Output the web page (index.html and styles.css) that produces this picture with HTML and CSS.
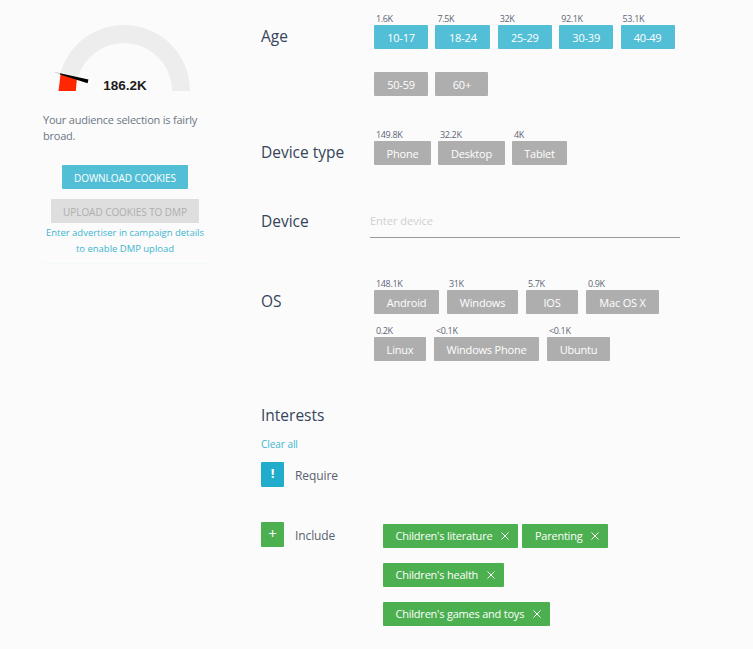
FILE: index.html
```html
<!DOCTYPE html>
<html lang="en">
<head>
<meta charset="utf-8">
<title>Audience</title>
<link rel="stylesheet" href="styles.css">
</head>
<body>
<div class="page">
  <aside class="side">
    <svg class="gauge" viewBox="0 0 261 100" width="261" height="100">
      <path d="M58 91A66 66 0 0 1 190 91L172 91A48 48 0 0 0 76 91Z" fill="#eeedee"/>
      <path d="M58.6 91L60.6 74.3L76.8 79.5L75.8 91Z" fill="#ff2600"/>
      <path d="M55 72L60 73.2L60 74.2L55 72.6Z" fill="#bbb"/>
      <path d="M60 73.2L88.4 79.6L87.6 83.2L60 74.4Z" fill="#000"/>
      <text class="gauge-num" x="125" y="90" text-anchor="middle">186.2K</text>
    </svg>
    <p class="note">Your audience selection is fairly broad.</p>
    <div class="actions">
      <button class="btn btn-primary">DOWNLOAD COOKIES</button>
      <button class="btn btn-off">UPLOAD COOKIES TO DMP</button>
      <p class="hint">Enter advertiser in campaign details<br>to enable DMP upload</p>
    </div>
  </aside>
  <main class="main">
    <section class="row row-age">
      <h2 class="label">Age</h2>
      <div class="opts">
        <div class="opt"><span class="count">1.6K</span><span class="chip on w54">10-17</span></div>
        <div class="opt"><span class="count">7.5K</span><span class="chip on w55">18-24</span></div>
        <div class="opt"><span class="count">32K</span><span class="chip on w54">25-29</span></div>
        <div class="opt"><span class="count">92.1K</span><span class="chip on w54">30-39</span></div>
        <div class="opt"><span class="count">53.1K</span><span class="chip on w54">40-49</span></div>
        <div class="opt"><span class="count">&nbsp;</span><span class="chip w54">50-59</span></div>
        <div class="opt"><span class="count">&nbsp;</span><span class="chip w53">60+</span></div>
      </div>
    </section>
    <section class="row row-type">
      <h2 class="label">Device type</h2>
      <div class="opts">
        <div class="opt"><span class="count">149.8K</span><span class="chip w57">Phone</span></div>
        <div class="opt"><span class="count">32.2K</span><span class="chip w67">Desktop</span></div>
        <div class="opt"><span class="count">4K</span><span class="chip w55">Tablet</span></div>
      </div>
    </section>
    <section class="row row-device">
      <h2 class="label">Device</h2>
      <input class="field" type="text" placeholder="Enter device">
    </section>
    <section class="row row-os">
      <h2 class="label">OS</h2>
      <div class="opts">
        <div class="opt"><span class="count">148.1K</span><span class="chip w65">Android</span></div>
        <div class="opt"><span class="count">31K</span><span class="chip w71">Windows</span></div>
        <div class="opt"><span class="count">5.7K</span><span class="chip w52">IOS</span></div>
        <div class="opt"><span class="count">0.9K</span><span class="chip w73">Mac OS X</span></div>
        <div class="opt"><span class="count">0.2K</span><span class="chip w52">Linux</span></div>
        <div class="opt"><span class="count">&lt;0.1K</span><span class="chip w105">Windows Phone</span></div>
        <div class="opt"><span class="count">&lt;0.1K</span><span class="chip w63">Ubuntu</span></div>
      </div>
    </section>
    <section class="interests">
      <h2 class="label-plain">Interests</h2>
      <a class="clear" href="#">Clear all</a>
      <div class="mode mode-req">
        <span class="mode-box box-blue">!</span>
        <span class="mode-name">Require</span>
      </div>
      <div class="mode mode-inc">
        <span class="mode-box box-green">+</span>
        <span class="mode-name">Include</span>
        <div class="tags">
          <span class="tag">Children's literature<svg class="x" viewBox="0 0 8 8" width="8" height="8"><path d="M.5.5L7.5 7.5M7.5.5L.5 7.5"/></svg></span>
          <span class="tag">Parenting<svg class="x" viewBox="0 0 8 8" width="8" height="8"><path d="M.5.5L7.5 7.5M7.5.5L.5 7.5"/></svg></span>
          <span class="tag">Children's health<svg class="x" viewBox="0 0 8 8" width="8" height="8"><path d="M.5.5L7.5 7.5M7.5.5L.5 7.5"/></svg></span>
          <span class="tag">Children's games and toys<svg class="x" viewBox="0 0 8 8" width="8" height="8"><path d="M.5.5L7.5 7.5M7.5.5L.5 7.5"/></svg></span>
        </div>
      </div>
    </section>
  </main>
</div>
</body>
</html>
```
FILE: styles.css
```css
* { box-sizing: border-box; }
html, body { margin: 0; padding: 0; height: 100%; }
body {
  background: #fbfbfb;
  font-family: "Open Sans", "Noto Sans", sans-serif;
  color: #35445a;
  overflow: hidden;
}
.page { display: flex; width: 753px; height: 649px; }

.side { width: 261px; flex: none; }
.gauge { display: block; margin-bottom: 12px; }
.gauge-num { font: bold 13.5px "Liberation Sans", Arial, sans-serif; fill: #1c1c1c; }
.note {
  margin: 0 0 0 43px;
  width: 165px;
  font-size: 11px;
  line-height: 16px;
  letter-spacing: -.22px;
  color: #6d7686;
}
.actions {
  margin: 21px 0 0 43px;
  width: 164px;
  display: flex;
  flex-direction: column;
  align-items: center;
  padding-bottom: 6px;
  border-bottom: 1px solid #f1f9fb;
}
.btn {
  border: 0;
  border-radius: 1px;
  height: 24px;
  padding: 2px 0 0;
  font-family: inherit;
  font-size: 10px;
  font-weight: 500;
  color: #fff;
  letter-spacing: -.05px;
}
.btn-primary { width: 126px; background: #53bfd6; }
.btn-off { width: 148px; margin-top: 10px; background: #dedede; color: #aeaeae; }
.hint {
  margin: 2px -10px 0;
  text-align: center;
  font-size: 9.5px;
  line-height: 16px;
  font-weight: 500;
  letter-spacing: -.02px;
  color: #3bb5cf;
}

.main { flex: 1; padding-top: 12px; }
.row { display: flex; }
.label, .label-plain { margin: 0; font-size: 15.5px; line-height: 22px; font-weight: 500; color: #35445a; }
.label { width: 113px; flex: none; padding-top: 12.5px; }
.opts { display: flex; flex-wrap: wrap; gap: 10px 0; width: 310px; }
.opt { display: flex; flex-direction: column; margin-right: 7.4px; }
.row-type .opt { margin-right: 7px; }
.row-os .opt { margin-right: 8px; }
.count { height: 13px; padding-left: 2px; font-size: 9px; line-height: 13px; letter-spacing: -.35px; color: #5d6675; white-space: nowrap; }
.chip {
  display: flex;
  height: 24px;
  align-items: center;
  justify-content: center;
  border-radius: 1px;
  background: #aeaeae;
  color: #fff;
  font-size: 11px;
  font-weight: 500;
  letter-spacing: -.2px;
  white-space: nowrap;
}
.chip.on { background: #53bfd6; }
.w52 { width: 52px; } .w53 { width: 53px; } .w54 { width: 54px; } .w55 { width: 55px; }
.w57 { width: 57px; } .w63 { width: 63px; } .w65 { width: 65px; } .w67 { width: 67px; }
.w71 { width: 71px; } .w73 { width: 73px; } .w105 { width: 105px; }

.row-type { margin-top: 32px; }
.row-device { margin-top: 32px; }
.field {
  margin: 13px 0 0 -4px;
  width: 310px;
  height: 28px;
  padding: 0 0 7px;
  border: 0;
  border-bottom: 1px solid #9a9a9a;
  background: transparent;
  font-family: inherit;
  font-size: 11px;
  color: #35445a;
  outline: none;
}
.field::placeholder { color: #cfcfcf; opacity: 1; }
.row-os { margin-top: 39px; }

.interests { margin-top: 43px; }
.clear { display: block; margin-top: 10px; font-size: 10px; line-height: 16px; letter-spacing: -.05px; color: #3bb5cf; text-decoration: none; }
.mode { display: flex; align-items: flex-start; }
.mode-req { margin-top: 10px; }
.mode-inc { margin-top: 32px; }
.mode-box {
  width: 23px;
  height: 25px;
  flex: none;
  border-radius: 1px;
  color: #fff;
  font-size: 13px;
  line-height: 22px;
  text-align: center;
}
.box-blue { background: #22accb; font-weight: 700; }
.box-green { background: #4caf50; font-weight: 400; font-size: 15px; }
.mode-name { margin-left: 11px; width: 88px; flex: none; font-size: 12px; line-height: 28px; letter-spacing: -.1px; color: #59626f; }
.tags { display: flex; flex-wrap: wrap; gap: 15px 4px; width: 240px; padding-top: 2px; }
.tag {
  display: inline-flex;
  align-items: center;
  height: 24px;
  padding: 0 9px 2px 12.5px;
  border-radius: 1px;
  background: #4caf50;
  color: #fff;
  font-size: 11px;
  font-weight: 500;
  letter-spacing: -.22px;
  white-space: nowrap;
}
.x { margin-left: 9px; margin-top: 2px; }
.x path { stroke: #fff; stroke-width: 1; fill: none; }
```
